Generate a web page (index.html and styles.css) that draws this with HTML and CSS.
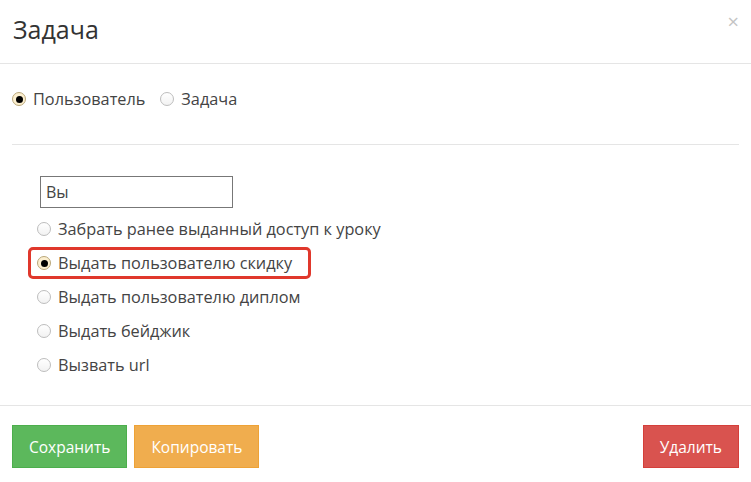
FILE: index.html
```html
<!DOCTYPE html>
<html lang="ru">
<head>
    <meta charset="UTF-8">
    <title>Задача</title>
    <link rel="stylesheet" href="styles.css">
</head>
<body>
    <div class="modal">
        <div class="modal-header">
            <h4 class="modal-title">Задача</h4>
            <span class="close">&times;</span>
        </div>

        <div class="modal-body">
            <div class="type-row">
                <label class="radio"><input type="radio" name="type" checked> Пользователь</label>
                <label class="radio"><input type="radio" name="type"> Задача</label>
            </div>

            <hr>

            <div class="actions">
                <input type="text" class="search" value="Вы">
                <label class="radio"><input type="radio" name="action"> Забрать ранее выданный доступ к уроку</label>
                <label class="radio highlighted"><input type="radio" name="action" checked> Выдать пользователю скидку</label>
                <label class="radio"><input type="radio" name="action"> Выдать пользователю диплом</label>
                <label class="radio"><input type="radio" name="action"> Выдать бейджик</label>
                <label class="radio"><input type="radio" name="action"> Вызвать url</label>
            </div>
        </div>

        <div class="modal-footer">
            <button class="btn btn-success">Сохранить</button>
            <button class="btn btn-warning">Копировать</button>
            <button class="btn btn-danger right">Удалить</button>
        </div>
    </div>
</body>
</html>
```

FILE: styles.css
```css
body {
    margin: 0;
    background: #fff;
    font-family: "Open Sans", Arial, sans-serif;
    color: #333;
}

.modal {
    width: 751px;
}

.modal-header {
    height: 64px;
    border-bottom: 1px solid #e5e5e5;
    display: flex;
    justify-content: space-between;
    padding: 0 12px 0 13px;
    box-sizing: border-box;
}

.modal-title {
    margin: 12px 0 0;
    font-size: 25px;
    font-weight: normal;
    color: #333;
}

.close {
    margin-top: 8px;
    font-size: 20px;
    color: #c4c4c4;
}

.modal-body {
    padding: 0 12px;
}

.type-row {
    display: flex;
    gap: 15px;
    padding-top: 24px;
}

.radio {
    display: flex;
    align-items: center;
    gap: 7px;
    font-size: 16.3px;
    color: #444;
    height: 22px;
}

.radio input {
    appearance: none;
    margin: 0;
    width: 14px;
    height: 14px;
    border: 1px solid #bdbdbd;
    border-radius: 50%;
    background: linear-gradient(#fff, #f2f2f2);
    box-sizing: border-box;
    position: relative;
}

.radio input:checked {
    border-color: #b9a77a;
    background: #fcefcf;
}

.radio input:checked::after {
    content: "";
    position: absolute;
    left: 2.5px;
    top: 2.5px;
    width: 7px;
    height: 7px;
    border-radius: 50%;
    background: #000;
}

hr {
    border: none;
    border-top: 1px solid #e5e5e5;
    margin: 34px 0 0;
}

.actions {
    padding: 31px 0 29px 25px;
    display: flex;
    flex-direction: column;
    gap: 12px;
}

.search {
    width: 193px;
    height: 32px;
    box-sizing: border-box;
    margin: 0 0 -2px 3px;
    border: 1px solid #777;
    padding: 0 5px;
    font-family: inherit;
    font-size: 16px;
    color: #444;
}

.highlighted {
    margin-left: -9px;
    width: 283px;
    height: 32px;
    box-sizing: border-box;
    border: 3px solid #e0382c;
    border-radius: 5px;
    padding-left: 6px;
    margin-top: -5px;
    margin-bottom: -5px;
}

.modal-footer {
    border-top: 1px solid #e5e5e5;
    padding: 19px 12px 0;
    display: flex;
    gap: 7px;
}

.btn {
    height: 43px;
    padding: 0 16px;
    font-family: inherit;
    font-size: 15.5px;
    color: #fff;
    border: 1px solid transparent;
    cursor: pointer;
}

.btn-success {
    background: #5cb85c;
    border-color: #4cae4c;
}

.btn-warning {
    background: #f0ad4e;
    border-color: #eea236;
}

.btn-danger {
    background: #d9534f;
    border-color: #d43f3a;
}

.right {
    margin-left: auto;
}
```
